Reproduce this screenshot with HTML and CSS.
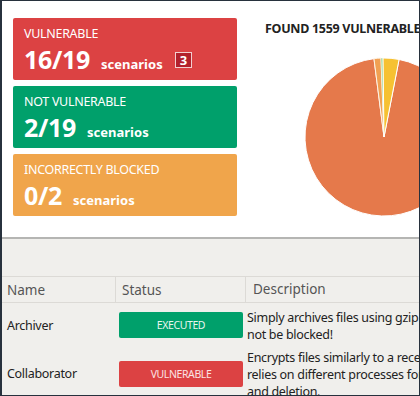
FILE: index.html
```html
<!DOCTYPE html>
<html lang="en">
<head>
    <meta charset="UTF-8">
    <title>Scenario results</title>
    <link rel="stylesheet" href="styles.css">
</head>
<body>
<div class="frame">
    <div class="summary">
        <div class="cards">
            <div class="card card-red">
                <span class="card-label">Vulnerable</span>
                <div class="card-value">
                    <b class="count">16/19</b>
                    <span class="unit">scenarios</span>
                    <span class="extra">3</span>
                </div>
            </div>
            <div class="card card-green">
                <span class="card-label">Not vulnerable</span>
                <div class="card-value">
                    <b class="count">2/19</b>
                    <span class="unit">scenarios</span>
                </div>
            </div>
            <div class="card card-orange">
                <span class="card-label">Incorrectly blocked</span>
                <div class="card-value">
                    <b class="count">0/2</b>
                    <span class="unit">scenarios</span>
                </div>
            </div>
        </div>
        <div class="chart">
            <h2 class="chart-title">Found 1559 vulnerable files</h2>
            <svg class="pie" width="170" height="170" viewBox="0 0 170 170">
                <path d="M84,84 L99.07,6.45 A79,79 0 1 1 73.96,5.64 Z" fill="#e5794b" stroke="#fff" stroke-width="1"/>
                <path d="M84,84 L73.96,5.64 A79,79 0 0 1 80.97,5.06 Z" fill="#f1a052" stroke="#fdf3e6" stroke-width="1"/>
                <path d="M84,84 L80.97,5.06 A79,79 0 0 1 83.04,5.01 Z" fill="#94d38a" stroke="#fff" stroke-width="0.5"/>
                <path d="M84,84 L83.04,5.01 A79,79 0 0 1 99.07,6.45 Z" fill="#f6c132" stroke="#fff" stroke-width="1"/>
            </svg>
        </div>
    </div>
    <div class="results">
        <div class="toolbar"></div>
        <div class="row head">
            <div class="cell col-name">Name</div>
            <div class="cell col-status">Status</div>
            <div class="cell col-desc">Description</div>
        </div>
        <div class="row data">
            <div class="cell col-name">Archiver</div>
            <div class="cell col-status"><span class="badge badge-green">Executed</span></div>
            <div class="cell col-desc">Simply archives files using gzip and should<br>not be blocked!</div>
        </div>
        <div class="row data">
            <div class="cell col-name">Collaborator</div>
            <div class="cell col-status"><span class="badge badge-red">Vulnerable</span></div>
            <div class="cell col-desc">Encrypts files similarly to a recent ransomware, but<br>relies on different processes for encryption<br>and deletion.</div>
        </div>
    </div>
</div>
</body>
</html>
```

FILE: styles.css
```css
html, body {
    margin: 0;
    padding: 0;
}
body {
    font-family: "Noto Sans", "Open Sans", sans-serif;
    background: #fff;
}
.frame {
    width: 420px;
    height: 396px;
    box-sizing: border-box;
    border: 1px solid #27313d;
    border-left-width: 2px;
    overflow: hidden;
    background: #f0efec;
}
.summary {
    height: 238px;
    background: #fff;
    border-bottom: 2px solid #b5b5b3;
    display: flex;
    padding: 17px 0 0 11px;
    box-sizing: border-box;
}
.cards {
    width: 224px;
    flex: 0 0 auto;
    display: flex;
    flex-direction: column;
    gap: 6px;
}
.card {
    height: 62px;
    border-radius: 2px;
    color: #fff;
    padding: 8px 11px 0 11px;
    box-sizing: border-box;
}
.card-red { background: #dc4243; }
.card-green { background: #00a06b; }
.card-orange { background: #f0a54b; }
.card-label {
    display: block;
    font-size: 12.5px;
    line-height: 15px;
    text-transform: uppercase;
    letter-spacing: -0.3px;
}
.card-value {
    display: flex;
    align-items: baseline;
    margin-top: 3px;
}
.count {
    font-size: 25px;
    line-height: 30px;
    letter-spacing: -0.3px;
}
.unit {
    font-size: 13px;
    font-weight: bold;
    margin-left: 11px;
}
.extra {
    align-self: flex-start;
    margin: 8px 0 0 12px;
    border: 1px solid #f2d0d0;
    background: #b2212c;
    font-size: 13px;
    font-weight: bold;
    line-height: 14px;
    padding: 0 4px;
}
.chart {
    flex: 1 0 auto;
    padding-left: 28px;
}
.chart-title {
    margin: 2px 0 0 0;
    font-size: 12.5px;
    font-weight: bold;
    text-transform: uppercase;
    color: #222;
    white-space: nowrap;
    letter-spacing: -0.3px;
}
.pie {
    display: block;
    margin: 16px 0 0 35px;
}
.toolbar {
    height: 37px;
}
.row {
    display: flex;
    font-size: 12.5px;
    letter-spacing: -0.3px;
    color: #222;
    white-space: nowrap;
}
.row.head {
    height: 27px;
    border-top: 1px solid #dcdad6;
    border-bottom: 1px solid #dcdad6;
    box-sizing: border-box;
    color: #555;
    font-size: 13.5px;
    letter-spacing: 0;
}
.row.head .cell {
    display: flex;
    align-items: center;
}
.row.head .col-status,
.row.head .col-desc {
    border-left: 1px solid #dcdad6;
}
.row.data {
    min-height: 44px;
    align-items: center;
}
.cell {
    flex: 0 0 auto;
    box-sizing: border-box;
}
.col-name {
    width: 113px;
    padding-left: 5px;
}
.col-status {
    width: 130px;
    padding-left: 4px;
}
.row.head .col-status {
    padding-left: 6px;
}
.col-desc {
    width: 260px;
    padding: 2px 0 0 2px;
    line-height: 17px;
}
.row.head .col-desc {
    padding: 0 0 0 7px;
}
.badge {
    display: block;
    width: 124px;
    height: 26px;
    line-height: 26px;
    border-radius: 2px;
    text-align: center;
    text-transform: uppercase;
    font-size: 10.5px;
    letter-spacing: -0.4px;
    color: #e8f5ee;
}
.badge-green { background: #00a06b; }
.badge-red { background: #dc4243; color: #fbe3e3; }
```
